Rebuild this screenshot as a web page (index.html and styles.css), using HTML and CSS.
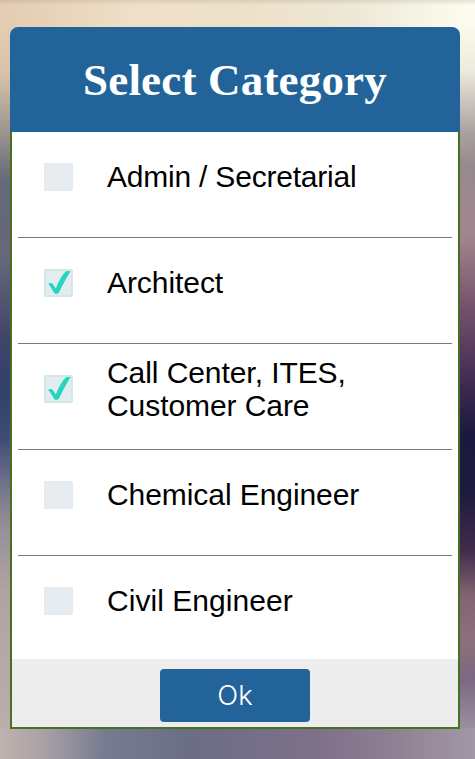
FILE: index.html
```html
<!DOCTYPE html>
<html lang="en">
<head>
<meta charset="utf-8">
<title>Select Category</title>
<link rel="stylesheet" href="styles.css">
</head>
<body>
<svg class="defs" width="0" height="0" aria-hidden="true">
  <symbol id="tick" viewBox="0 0 29 28"><path d="M4.300 14.800C6 13.500 8.300 14 9.300 15.800L11.800 19.500C14.500 13 17.500 6.500 22 2.300L26.600 2C22.500 8.500 18.800 15.500 15 23.500C13.500 25.300 11 25.300 9.700 23.200C8.300 20.500 6.200 17.500 4.300 14.800Z"/></symbol>
</svg>
<main class="dialog">
  <h1 class="title">Select Category</h1>
  <ul class="list">
    <li class="item"><span class="box"></span><span class="label admin">Admin / Secretarial</span></li>
    <li class="item"><span class="box checked"><svg><use href="#tick"/></svg></span><span class="label">Architect</span></li>
    <li class="item"><span class="box checked"><svg><use href="#tick"/></svg></span><span class="label">Call Center, ITES, Customer Care</span></li>
    <li class="item"><span class="box"></span><span class="label">Chemical Engineer</span></li>
    <li class="item"><span class="box"></span><span class="label civil">Civil Engineer</span></li>
  </ul>
  <footer class="footer"><button class="ok">Ok</button></footer>
</main>
</body>
</html>
```
FILE: styles.css
```css
* { box-sizing: border-box; }
html { height: 100%; }
body {
  margin: 0;
  height: 759px;
  padding: 27px 15px 30px 10px;
  overflow: hidden;
  background:
    linear-gradient(#8d887d38, transparent) 0 0 / 100% 5px no-repeat,
    linear-gradient(90deg, #e3ccb1, #efdfc6 28%, #eee0c8 50%, #eee8d6 75%, #fafaec 95%, #fbfbef) 0 0 / 100% 28px no-repeat,
    linear-gradient(90deg, #bfb3af, #aaa1a6 9%, #777b91 22%, #6b6d84 40%, #756f87 54%, #80708a 68%, #8f8194 83%, #a297a5) 0 728px / 100% 31px no-repeat,
    linear-gradient(#e3ccb1 28px, #d6c2ab 75px, #9a948c 133px, #646878 182px, #66677a 260px, #414569 335px, #32406c 390px, #3e4d78 440px, #77788c 490px, #989098 530px, #afa4a2 590px, #b9aeaa 728px) 0 0 / 12px 100% no-repeat,
    linear-gradient(#fafaec 28px, #eeeade 70px, #aaa29f 132px, #968a8e 165px, #a2868e 235px, #76536e 305px, #412c54 380px, #1b183f 435px, #1d193f 490px, #402c4b 550px, #80646f 595px, #8c717c 640px, #7d6883 680px, #9a8f9f 728px) 100% 0 / 17px 100% no-repeat;
}
.defs { display: none; }
.dialog {
  height: 702px;
  display: flex;
  flex-direction: column;
  overflow: hidden;
  border-radius: 8px 8px 0 0;
  background: #fff;
}
.title {
  flex: 0 0 105px;
  margin: 0;
  padding-top: 1px;
  background: #226499;
  color: #fff;
  font: bold 45px/104px "Liberation Serif", serif;
  letter-spacing: .18px;
  text-align: center;
}
.list {
  flex: 0 0 527px;
  margin: 0;
  padding: 0 6px;
  list-style: none;
  border: solid #49701f;
  border-width: 0 2px;
}
.item {
  height: 106px;
  display: flex;
  align-items: center;
  padding: 0 60px 16px 26px;
  border-bottom: 1px solid #737c84;
}
.item:last-child { height: 103px; padding-bottom: 14px; border-bottom: 0; }
.box {
  width: 29px;
  height: 28px;
  flex: none;
  margin-right: 34px;
  border: 1px solid #e3e9ec;
  border-radius: 2px;
  background: #e6ecef;
}
.checked { border: 2px solid #d5e6e8; background: #e3ecef; }
.checked svg { display: block; width: 29px; height: 28px; margin: -2px; fill: #24d5bf; overflow: visible; }
.label { font: 30px/33px "Liberation Sans", sans-serif; letter-spacing: -.07px; color: #000; }
.admin { letter-spacing: -.21px; }
.civil { letter-spacing: .05px; }
.footer {
  flex: 1;
  display: flex;
  justify-content: center;
  align-items: flex-start;
  padding-top: 10px;
  background: #ededed;
  border: solid #49701f;
  border-width: 0 2px 2px;
}
.ok {
  width: 150px;
  height: 53px;
  padding: 0;
  border: 0;
  border-radius: 4px;
  background: #226499;
  color: #fff;
  font: 300 27.500px/53px Inter, sans-serif;
}
```
